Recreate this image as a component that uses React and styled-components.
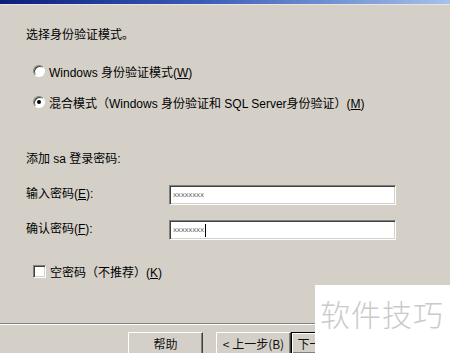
import styled, { createGlobalStyle } from "styled-components";

const GlobalStyle = createGlobalStyle`
  html, body {
    margin: 0;
    padding: 0;
    background: #d4d0c8;
  }
  * {
    box-sizing: border-box;
  }
`;

const Window = styled.div`
  position: relative;
  width: 450px;
  height: 353px;
  overflow: hidden;
  background: #d4d0c8;
  font-family: "Liberation Sans", "Noto Sans CJK SC", sans-serif;
  font-size: 12px;
  color: #000;
  display: flex;
  flex-direction: column;
`;

const TitleStrip = styled.div`
  height: 5px;
  flex: none;
  background: linear-gradient(to right, #0b1e7a 0%, #3a5cb8 45%, #a6c2ea 100%);
  border-bottom: 1px solid #e8e6e0;
`;

const Body = styled.div`
  padding: 22px 0 0 26px;
  display: flex;
  flex-direction: column;
`;

const Line = styled.div`
  height: 16px;
  line-height: 16px;
  margin-top: ${(p) => p.$top || 0}px;
  white-space: nowrap;
`;

const Options = styled.div`
  display: flex;
  flex-direction: column;
  gap: 15px;
  margin-top: ${(p) => p.$top ?? 20}px;
  padding-left: 7px;
`;

const OptionRow = styled.label`
  display: flex;
  align-items: center;
  gap: 4px;
  height: 16px;
  white-space: nowrap;
`;

const Radio = styled.span`
  position: relative;
  width: 12px;
  height: 12px;
  flex: none;
  border-radius: 50%;
  background: #fff;
  border: 1px solid;
  border-color: #808080 #fff #fff #808080;
  box-shadow: inset 1px 1px 0 #404040;
  &::after {
    content: "";
    display: ${(p) => (p.$checked ? "block" : "none")};
    position: absolute;
    left: 3px;
    top: 3px;
    width: 4px;
    height: 4px;
    border-radius: 50%;
    background: #000;
  }
`;

const Check = styled.span`
  width: 13px;
  height: 13px;
  flex: none;
  background: #fff;
  border: 1px solid;
  border-color: #808080 #fff #fff #808080;
  box-shadow: inset 1px 1px 0 #404040, inset -1px -1px 0 #d4d0c8;
`;

const FieldRow = styled.div`
  display: flex;
  align-items: center;
  height: 20px;
  margin-top: ${(p) => p.$top || 0}px;
`;

const FieldLabel = styled.span`
  width: 143px;
  line-height: 16px;
  margin-top: -3px;
  white-space: nowrap;
`;

const Input = styled.div`
  width: 227px;
  height: 20px;
  background: #fff;
  border: 1px solid;
  border-color: #808080 #fff #fff #808080;
  box-shadow: inset 1px 1px 0 #404040, inset -1px -1px 0 #d4d0c8;
  display: flex;
  align-items: center;
  padding-left: 3px;
  font-family: "DejaVu Sans", sans-serif;
  font-size: 7px;
  letter-spacing: -0.3px;
  color: #666;
`;

const Caret = styled.span`
  width: 1px;
  height: 13px;
  margin-left: 1px;
  background: #000;
`;

const Separator = styled.div`
  margin-top: 44px;
  height: 2px;
  flex: none;
  border-top: 1px solid #808080;
  border-bottom: 1px solid #fff;
`;

const ButtonRow = styled.div`
  display: flex;
  padding: 7px 0 0 128px;
`;

const Button = styled.div`
  width: 75px;
  height: 23px;
  margin-right: ${(p) => p.$gap || 0}px;
  display: flex;
  align-items: center;
  justify-content: center;
  background: #d4d0c8;
  border: 1px solid;
  border-color: ${(p) => (p.$default ? "#000" : "#fff #404040 #404040 #fff")};
  box-shadow: ${(p) =>
    p.$default
      ? "inset 1px 1px 0 #fff, inset -2px -2px 0 #808080"
      : "inset -1px -1px 0 #808080"};
  font-family: "Noto Sans CJK SC", sans-serif;
  font-size: 12px;
  color: #111;
  white-space: nowrap;
`;

const Watermark = styled.div`
  position: absolute;
  left: 315px;
  top: 285px;
  width: 135px;
  height: 68px;
  background: #fff;
  padding: 12px 0 0 5px;
  font-family: "Noto Sans CJK SC", sans-serif;
  font-size: 30px;
  font-weight: 300;
  line-height: 32px;
  color: #cacaca;
  letter-spacing: 1px;
  white-space: nowrap;
`;

export default function App() {
  return (
    <Window>
      <GlobalStyle />
      <TitleStrip />
      <Body>
        <Line>选择身份验证模式。</Line>
        <Options>
          <OptionRow>
            <Radio />
            <span>
              Windows 身份验证模式(<u>W</u>)
            </span>
          </OptionRow>
          <OptionRow>
            <Radio $checked />
            <span>
              混合模式（Windows 身份验证和 SQL Server身份验证）(<u>M</u>)
            </span>
          </OptionRow>
        </Options>
        <Line $top={41}>添加 sa 登录密码:</Line>
        <FieldRow $top={18}>
          <FieldLabel>
            输入密码(<u>E</u>):
          </FieldLabel>
          <Input>xxxxxxxx</Input>
        </FieldRow>
        <FieldRow $top={15}>
          <FieldLabel>
            确认密码(<u>F</u>):
          </FieldLabel>
          <Input>
            xxxxxxxx
            <Caret />
          </Input>
        </FieldRow>
        <Options $top={23}>
          <OptionRow>
            <Check />
            <span>
              空密码（不推荐）(<u>K</u>)
            </span>
          </OptionRow>
        </Options>
      </Body>
      <Separator />
      <ButtonRow>
        <Button $gap={13}>帮助</Button>
        <Button>&lt; 上一步(B)</Button>
        <Button $default>下一步(N) &gt;</Button>
      </ButtonRow>
      <Watermark>软件技巧</Watermark>
    </Window>
  );
}
